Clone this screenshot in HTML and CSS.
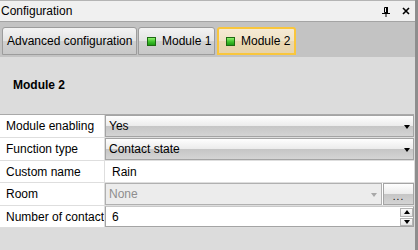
FILE: index.html
```html
<!DOCTYPE html>
<html lang="en">
<head>
  <meta name="viewport" content="width=device-width, initial-scale=1.0">
  <title>Configuration</title>
  <link rel="stylesheet" href="styles.css">
</head>
<body>
  <div class="panel">
    <div class="titlebar">
      <span class="title">Configuration</span>
      <span class="title-icons">
        <svg class="pin" width="10" height="10" viewBox="0 0 10 10">
          <path d="M3.5 0.5h3v5h-3z" fill="none" stroke="#000"/>
          <path d="M6 0v6" stroke="#000" stroke-width="2"/>
          <path d="M1 6.5h8" stroke="#000"/>
          <path d="M5 6.5v3.5" stroke="#000"/>
        </svg>
        <svg class="close" width="8" height="8" viewBox="0 0 8 8">
          <path d="M1 1l6 6M7 1l-6 6" stroke="#000" stroke-width="1.6"/>
        </svg>
      </span>
    </div>

    <div class="tabstrip">
      <div class="tab tab-advanced">Advanced configuration</div>
      <div class="tab tab-module"><span class="led"></span>Module 1</div>
      <div class="tab tab-module active"><span class="led"></span>Module 2</div>
    </div>

    <div class="content">
      <h2 class="module-title">Module 2</h2>

      <div class="grid">
        <div class="row">
          <div class="label">Module enabling</div>
          <div class="value">
            <div class="combo"><span>Yes</span><span class="arrow"></span></div>
          </div>
        </div>
        <div class="row">
          <div class="label">Function type</div>
          <div class="value">
            <div class="combo"><span>Contact state</span><span class="arrow"></span></div>
          </div>
        </div>
        <div class="row short">
          <div class="label">Custom name</div>
          <div class="value text">Rain</div>
        </div>
        <div class="row">
          <div class="label">Room</div>
          <div class="value">
            <div class="combo disabled"><span>None</span><span class="arrow"></span></div>
            <div class="dots-btn"><span>...</span></div>
          </div>
        </div>
        <div class="row short">
          <div class="label">Number of contact</div>
          <div class="value">
            <div class="numeric">
              <span>6</span>
              <span class="spin">
                <span class="spin-btn"><span class="up"></span></span>
                <span class="spin-btn"><span class="down"></span></span>
              </span>
            </div>
          </div>
        </div>
      </div>
    </div>
  </div>
</body>
</html>
```

FILE: styles.css
```css
body {
  margin: 0;
  font-family: "Liberation Sans", Arial, sans-serif;
  font-size: 12px;
  color: #000;
  background-color: #dcdcdc;
}

.panel {
  width: 415px;
  height: 250px;
  border-right: 3px solid #8e8e8e;
  display: flex;
  flex-direction: column;
  background-color: #dcdcdc;
  overflow: hidden;
}

/* title bar */
.titlebar {
  height: 20px;
  border-top: 1px solid #b4b4b4;
  border-bottom: 1px solid #a4a4a4;
  background-color: #f0f0f0;
  display: flex;
  align-items: center;
  padding-left: 1px;
}

.title-icons {
  margin-left: auto;
  display: flex;
  align-items: center;
  gap: 11px;
  padding-right: 5px;
}

.pin {
  margin-top: 1px;
}

/* tabs */
.tabstrip {
  height: 35px;
  box-sizing: border-box;
  padding: 5px 0 0 2px;
  background-color: #c3c3c3;
  display: flex;
  align-items: flex-start;
  gap: 1px;
}

.tab {
  height: 28px;
  box-sizing: border-box;
  border: 1px solid #9c9c9c;
  border-radius: 3px 3px 0 0;
  background: linear-gradient(#f3f3f3, #e4e4e4 50%, #d0d0d0 52%, #c8c8c8);
  display: flex;
  align-items: center;
  white-space: nowrap;
}

.tab-advanced {
  width: 135px;
  padding-left: 4px;
}

.tab-module {
  width: 77px;
  padding-left: 8px;
  gap: 6px;
}

.tab.active {
  width: 79px;
  margin-left: 1px;
  border: 2px solid #f9c63c;
  padding-left: 7px;
  background: linear-gradient(#f5ead4, #efe2c6 50%, #e9d7b2 52%, #e6d3ad);
}

.led {
  width: 9px;
  height: 9px;
  box-sizing: border-box;
  border: 1px solid #1d6a12;
  background: linear-gradient(#8ef06c, #3cc02a 55%, #1f9a16);
}

/* content */
.content {
  flex: 1;
  background-color: #dcdcdc;
}

.module-title {
  margin: 0;
  padding: 21px 0 22px 13px;
  font-size: 12px;
  line-height: 14px;
  font-weight: bold;
}

.grid {
  width: 414px;
  border-top: 1px solid #a9a9a9;
}

.row {
  height: 23px;
  box-sizing: border-box;
  border-bottom: 1px solid #dedede;
  display: flex;
  background-color: #fff;
}

.row.short {
  height: 22px;
}

.label {
  width: 105px;
  box-sizing: border-box;
  padding-left: 6px;
  border-right: 1px solid #dedede;
  display: flex;
  align-items: center;
  white-space: nowrap;
  overflow: hidden;
}

.value {
  flex: 1;
  display: flex;
}

.value.text {
  align-items: center;
  padding-left: 7px;
}

.combo {
  flex: 1;
  box-sizing: border-box;
  border: 1px solid #a4a4a4;
  background: linear-gradient(#fefefe, #ececec 48%, #c6c6c6 52%, #d4d4d4);
  display: flex;
  align-items: center;
  justify-content: space-between;
  padding: 0 3px 0 3px;
}

.arrow {
  width: 0;
  height: 0;
  border-left: 3px solid transparent;
  border-right: 3px solid transparent;
  border-top: 4px solid #000;
  margin-top: 1px;
}

.combo.disabled {
  flex: none;
  width: 277px;
  background: #ececec;
  border-color: #b0b0b0;
  color: #8e8e8e;
  padding-right: 4px;
}

.combo.disabled .arrow {
  border-top-color: #a8a8a8;
}

.dots-btn {
  flex: 1;
  margin-left: 1px;
  box-sizing: border-box;
  border: 1px solid #a4a4a4;
  background: linear-gradient(#fefefe, #ececec 48%, #c6c6c6 52%, #d4d4d4);
  display: flex;
  justify-content: center;
  align-items: flex-end;
  font-size: 10px;
  line-height: 10px;
  padding-bottom: 2px;
  letter-spacing: 1px;
}

.numeric {
  flex: 1;
  box-sizing: border-box;
  border: 1px solid #a4a4a4;
  border-top-color: #c8c8c8;
  background-color: #fff;
  display: flex;
  align-items: center;
  padding-left: 6px;
}

.spin {
  margin-left: auto;
  display: flex;
  flex-direction: column;
  gap: 1px;
  padding: 1px 0 0 0;
  align-self: stretch;
}

.spin-btn {
  width: 13px;
  height: 9px;
  box-sizing: border-box;
  border: 1px solid #b4b4b4;
  background: linear-gradient(#fafafa, #e6e6e6);
  display: flex;
  align-items: center;
  justify-content: center;
}

.up {
  width: 0;
  height: 0;
  border-left: 3px solid transparent;
  border-right: 3px solid transparent;
  border-bottom: 4px solid #000;
}

.down {
  width: 0;
  height: 0;
  border-left: 3px solid transparent;
  border-right: 3px solid transparent;
  border-top: 4px solid #000;
}
```
